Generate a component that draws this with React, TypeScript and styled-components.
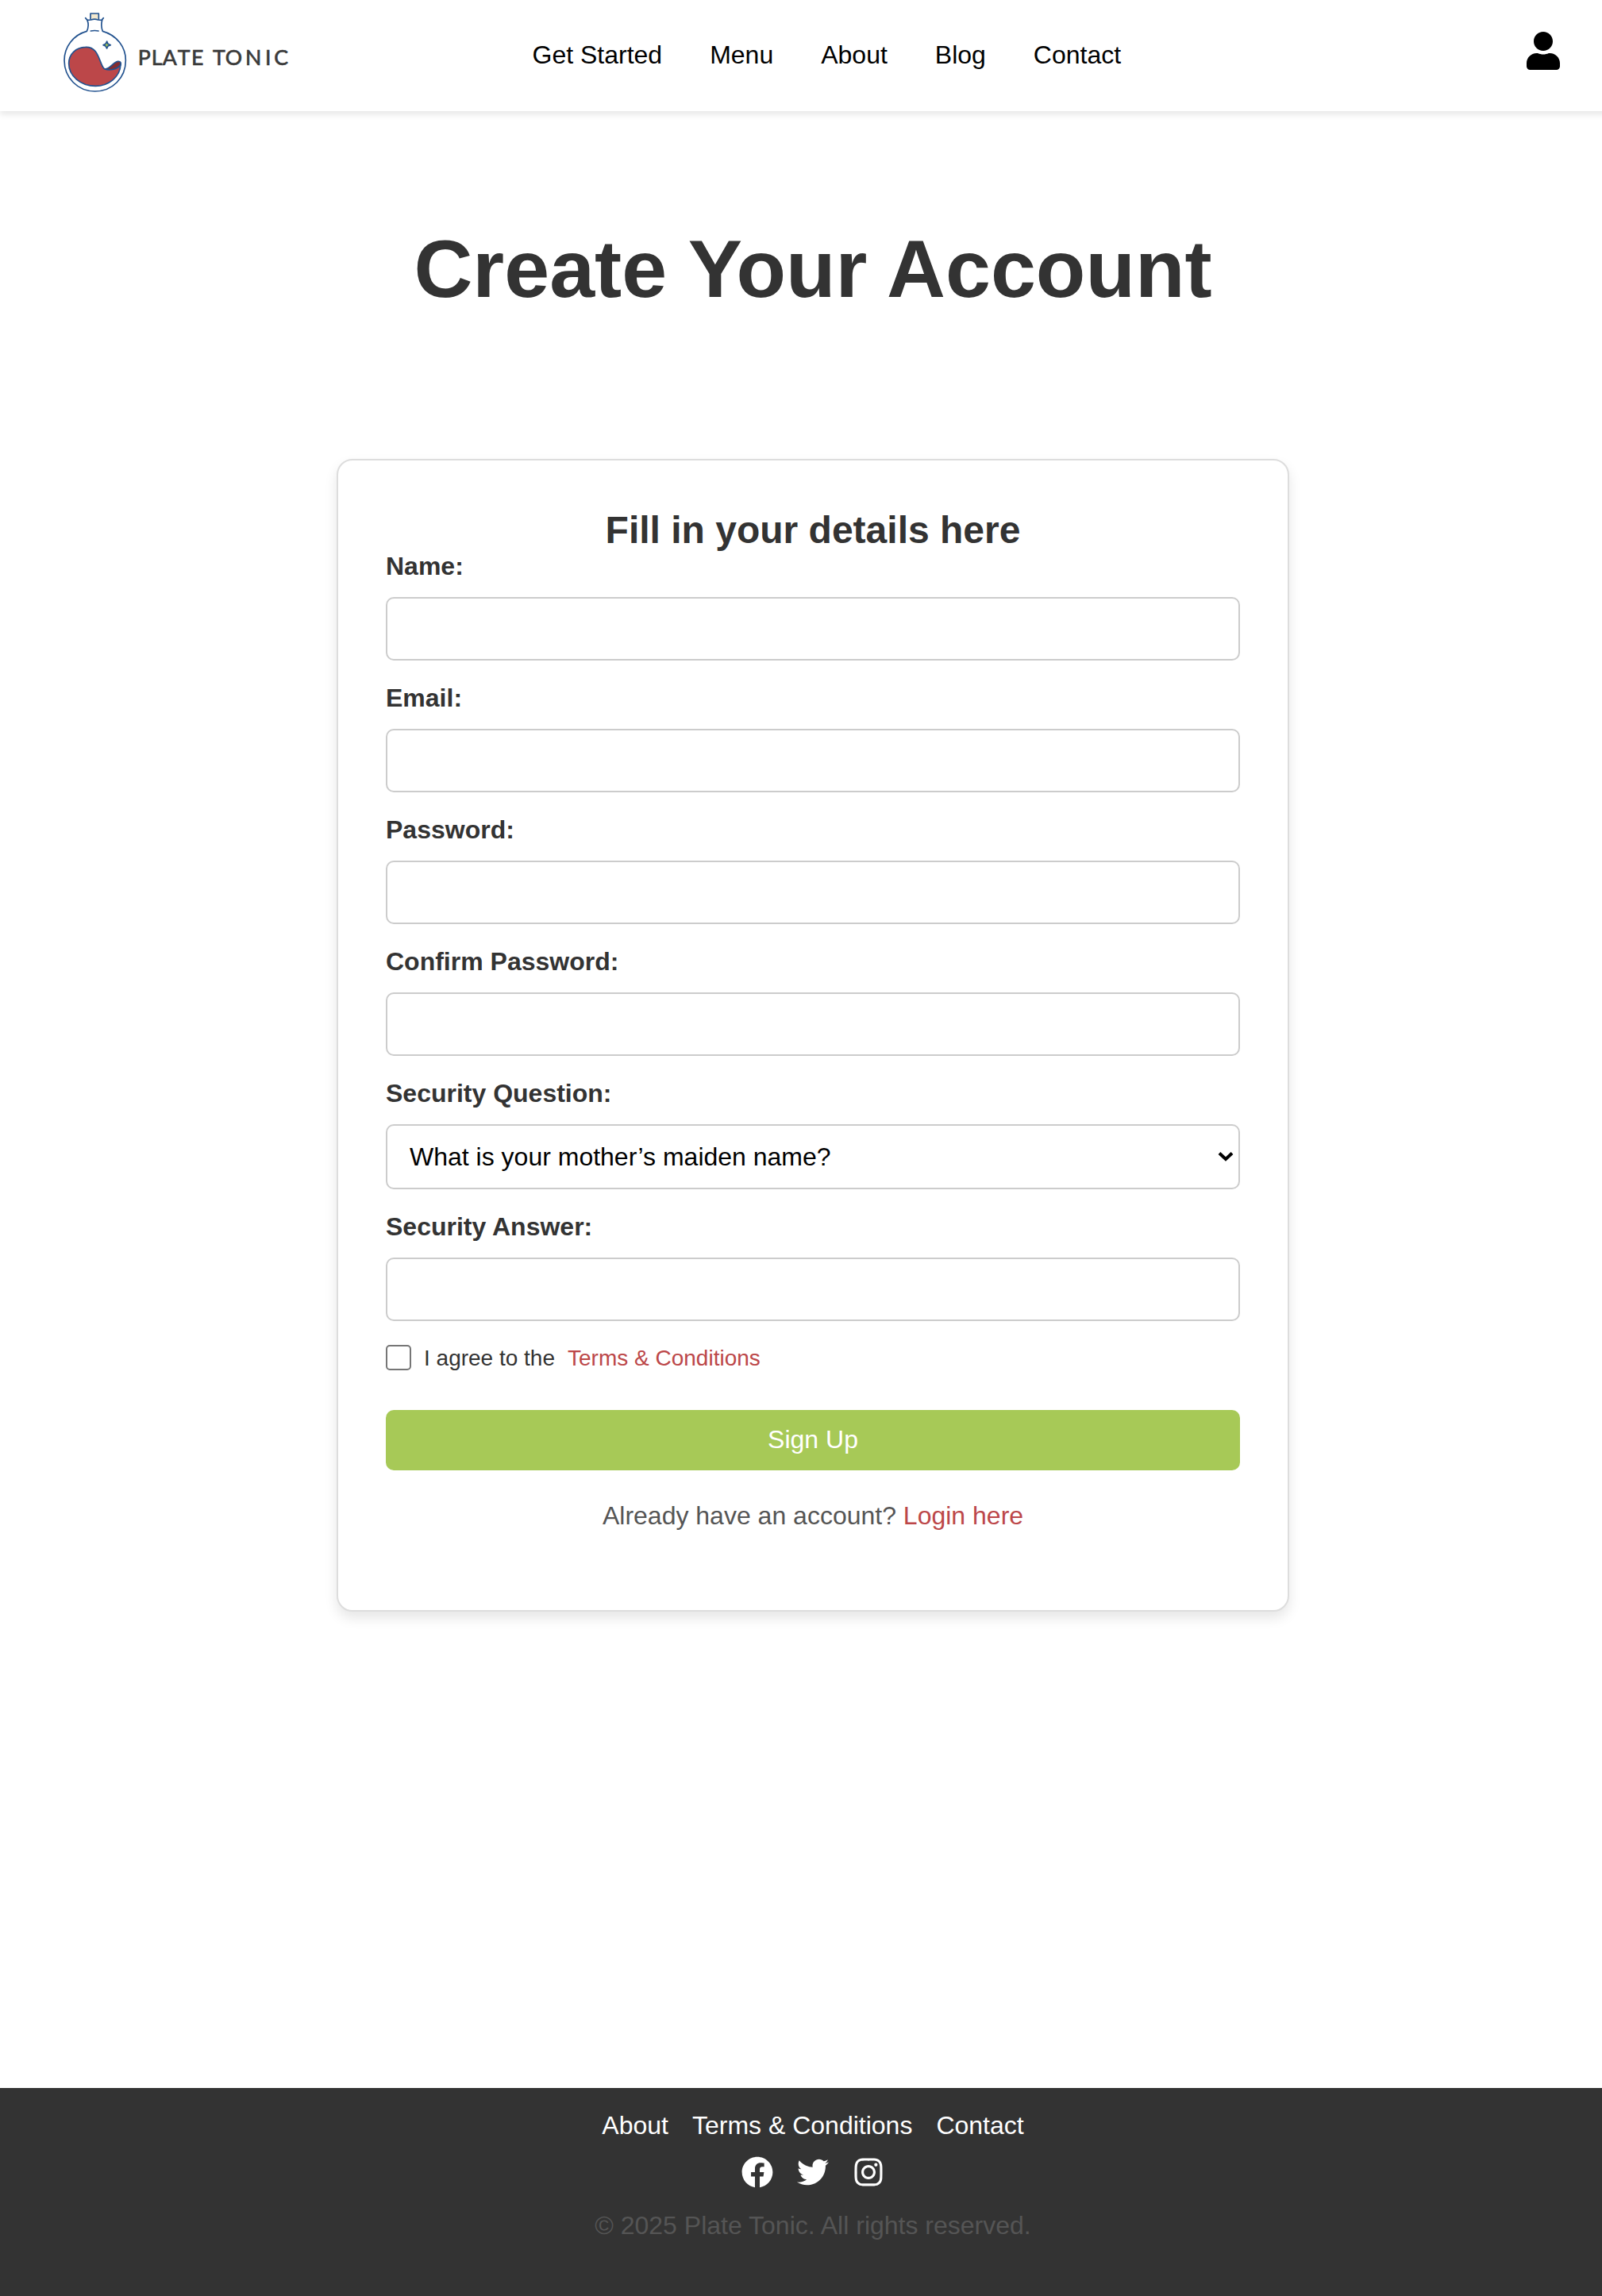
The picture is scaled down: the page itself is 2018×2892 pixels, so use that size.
import React from "react";
import styled, { createGlobalStyle } from "styled-components";
import { FaUser, FaFacebook, FaTwitter, FaInstagram } from "react-icons/fa";

const GlobalStyle = createGlobalStyle`
  *, *::before, *::after { box-sizing: border-box; }
  html, body { margin: 0; padding: 0; background: #fff; }
  body {
    overflow-x: hidden;
    font-family: Arial, "Liberation Sans", sans-serif;
    font-size: 32px;
    line-height: 36px;
    color: #333;
  }
  h1, h2, p { margin: 0; }
  a { text-decoration: none; }
`;

const Viewport = styled.div`
  width: 100%;
  overflow: hidden;
`;

const Page = styled.div`
  display: flex;
  flex-direction: column;
  width: 2048px;
  min-height: 2892px;
`;

const Header = styled.header`
  display: flex;
  align-items: flex-start;
  height: 140px;
  padding: 14px 83px 0 80px;
  background: #fff;
  box-shadow: 0 4px 8px rgba(0, 0, 0, 0.1);
`;

const LogoLink = styled.a`
  display: block;
  width: 284px;
  height: 104px;
  svg { display: block; }
`;

const Nav = styled.nav`
  display: flex;
  gap: 60px;
  margin: 37px auto 0 306.5px;
`;

const NavLink = styled.a`
  color: #000;
`;

const AccountButton = styled.a`
  display: flex;
  margin-top: 26px;
  font-size: 48px;
  color: #000;
  svg { width: 42px; height: 48px; }
`;

const Main = styled.main`
  display: flex;
  flex-direction: column;
  align-items: center;
  padding-top: 140px;
`;

const Title = styled.h1`
  font-size: 102.4px;
  line-height: 118px;
  font-weight: bold;
`;

const Card = styled.form`
  display: flex;
  flex-direction: column;
  width: 1200px;
  height: 1452px;
  margin-top: 180px;
  padding: 60px;
  border: 2px solid #ddd;
  border-radius: 20px;
  background: #fff;
  box-shadow: 0 8px 16px rgba(0, 0, 0, 0.1);
`;

const CardTitle = styled.h2`
  height: 55px;
  font-size: 48px;
  line-height: 55px;
  text-align: center;
`;

const Field = styled.div`
  display: flex;
  flex-direction: column;
  margin-bottom: 29px;
`;

const Label = styled.label`
  height: 37px;
  margin-bottom: 20px;
  font-weight: bold;
`;

const Input = styled.input`
  height: 80px;
  padding: 20px;
  border: 2px solid #ccc;
  border-radius: 10px;
  background: #fff;
  font: inherit;
  outline: none;
`;

const SelectBox = styled.div`
  display: flex;
  align-items: center;
  justify-content: space-between;
  height: 82px;
  padding: 0 6px 0 28px;
  border: 2px solid #ccc;
  border-radius: 10px;
  background: #fff;
  color: #000;
`;

const Agreement = styled.div`
  display: flex;
  align-items: flex-start;
  height: 32px;
  margin-top: 1px;
  font-size: 28px;
  line-height: 34px;
`;

const Checkbox = styled.input`
  appearance: none;
  width: 32px;
  height: 32px;
  margin: 0 16px 0 0;
  border: 2px solid #767676;
  border-radius: 5px;
  background: #fff;
`;

const AccentLink = styled.a`
  color: #bc4749;
`;

const TermsLink = styled(AccentLink)`
  margin-left: 16px;
`;

const SubmitButton = styled.button`
  height: 76px;
  margin-top: 50px;
  padding: 19px 20px 21px;
  border: 0;
  border-radius: 10px;
  background: #a7c957;
  color: #fff;
  font: inherit;
`;

const LoginPrompt = styled.p`
  margin-top: 39px;
  color: #555;
  text-align: center;
`;

const Footer = styled.footer`
  display: flex;
  flex-direction: column;
  align-items: center;
  height: 262px;
  margin-top: auto;
  padding-top: 29px;
  background: #333;
`;

const FooterLinks = styled.div`
  display: flex;
  gap: 30px;
  a { color: #fff; }
`;

const SocialLinks = styled.div`
  display: flex;
  gap: 30px;
  margin-top: 21px;
  font-size: 40px;
  a { display: flex; color: #fff; }
  svg { width: 40px; height: 40px; }
`;

const Copyright = styled.p`
  margin-top: 29px;
  color: #555;
`;

const Logo = () => (
  <svg width="284" height="104" viewBox="60 42 852 312" fill="none">
    <path d="M162 51 H193 V75 L178 71 L162 75 Z" fill="#f2e8cf" />
    <g stroke="#22528f" strokeWidth="5" strokeLinecap="round" strokeLinejoin="round">
      <path d="M162 73 V51 H193 V73" />
      <path d="M143 68 L150 76 L164 75 Q178 70 190 75 L204 76 L211 68" />
      <path d="M150 76 Q158 97 148 118 C96 132 63 178 63 228 C63 294 114 345 179 345 C245 345 295 294 295 228 C295 178 262 133 208 118 Q200 98 206 76" />
      <path d="M163 117 Q178 114 192 117" />
      <path d="M216 261 C235 262 247 235 265 232 C276 230 278 238 276 245 C269 263 235 267 216 261 Z" fill="#842d31" />
      <path d="M143 178 C182 176 190 210 203 241 Q209 257 216 261 C235 268 266 262 276 243 C274 292 229 325 181 325 C125 325 80 287 80 240 C80 204 107 179 143 178 Z" fill="#bc4749" />
      <path d="M224 156 L228 166 L238 170 L228 174 L224 183 L219 174 L210 170 L219 166 Z" fill="#a7c957" />
    </g>
    <text
      x="341 392 434 491 543 590 624 671 747 822 856"
      y="245"
      fontFamily="Lato, sans-serif"
      fontSize="80"
      fontWeight="400"
      fill="#3a3a3a"
      stroke="#3a3a3a"
      strokeWidth="2"
    >
      PLATE TONIC
    </text>
  </svg>
);

const Chevron = () => (
  <svg width="20" height="14" viewBox="0 0 20 14" fill="none">
    <path d="M2 2.5 L10 10 L18 2.5" stroke="#000" strokeWidth="4" />
  </svg>
);

const navItems = ["Get Started", "Menu", "About", "Blog", "Contact"];
const textFields = [
  { id: "name", label: "Name:", type: "text" },
  { id: "email", label: "Email:", type: "email" },
  { id: "password", label: "Password:", type: "password" },
  { id: "confirm", label: "Confirm Password:", type: "password" },
];

export default function App() {
  return (
    <Viewport>
      <GlobalStyle />
      <Page>
        <Header>
          <LogoLink>
            <Logo />
          </LogoLink>
          <Nav>
            {navItems.map((item) => (
              <NavLink key={item}>{item}</NavLink>
            ))}
          </Nav>
          <AccountButton>
            <FaUser />
          </AccountButton>
        </Header>
        <Main>
          <Title>Create Your Account</Title>
          <Card>
            <CardTitle>Fill in your details here</CardTitle>
            {textFields.map((f) => (
              <Field key={f.id}>
                <Label htmlFor={f.id}>{f.label}</Label>
                <Input id={f.id} type={f.type} />
              </Field>
            ))}
            <Field>
              <Label>Security Question:</Label>
              <SelectBox>
                <span>What is your mother’s maiden name?</span>
                <Chevron />
              </SelectBox>
            </Field>
            <Field>
              <Label htmlFor="answer">Security Answer:</Label>
              <Input id="answer" type="text" />
            </Field>
            <Agreement>
              <Checkbox type="checkbox" />
              <span>I agree to the</span>
              <TermsLink>Terms &amp; Conditions</TermsLink>
            </Agreement>
            <SubmitButton type="button">Sign Up</SubmitButton>
            <LoginPrompt>
              Already have an account? <AccentLink>Login here</AccentLink>
            </LoginPrompt>
          </Card>
        </Main>
        <Footer>
          <FooterLinks>
            <a>About</a>
            <a>Terms &amp; Conditions</a>
            <a>Contact</a>
          </FooterLinks>
          <SocialLinks>
            <a><FaFacebook /></a>
            <a><FaTwitter /></a>
            <a><FaInstagram /></a>
          </SocialLinks>
          <Copyright>© 2025 Plate Tonic. All rights reserved.</Copyright>
        </Footer>
      </Page>
    </Viewport>
  );
}
